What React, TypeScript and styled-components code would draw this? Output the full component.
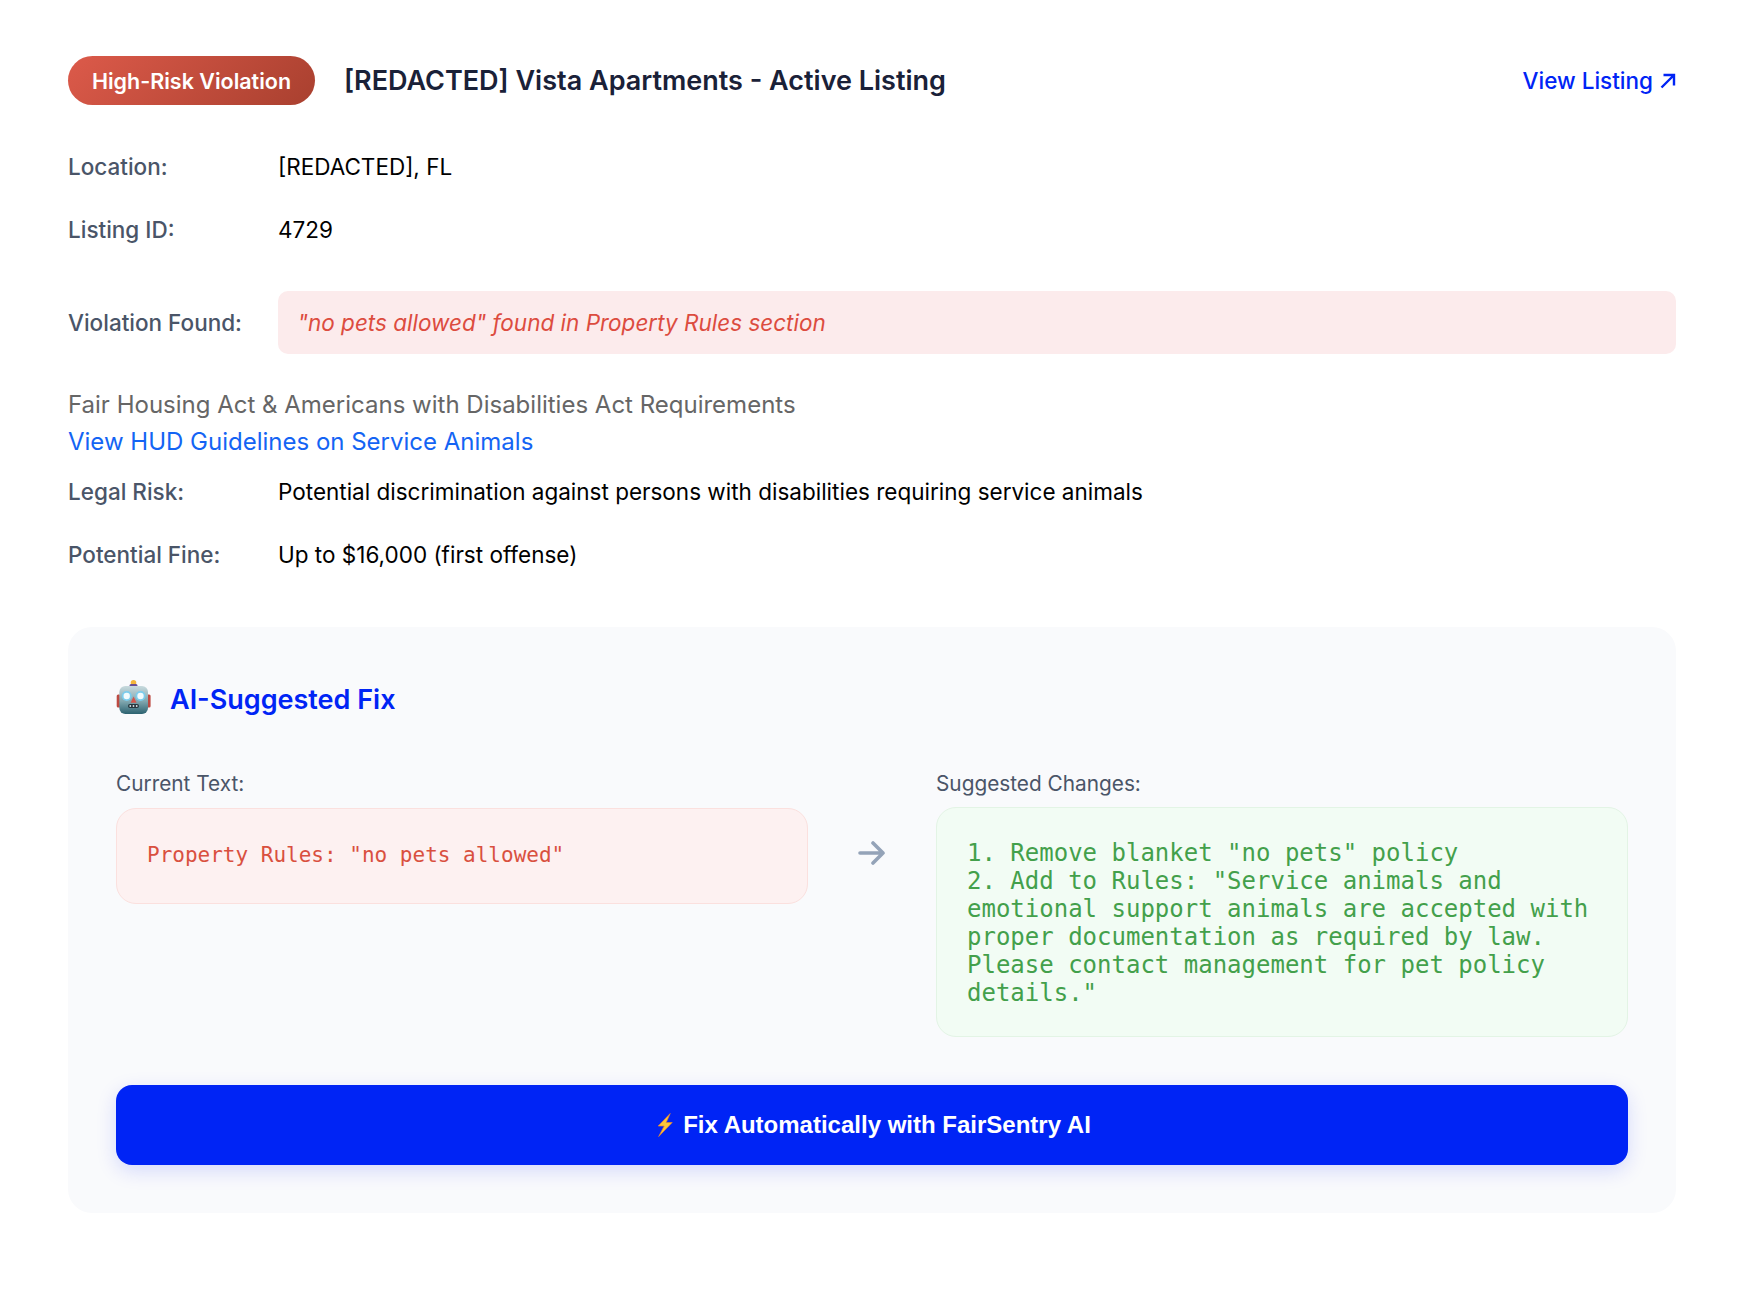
import React from 'react';
import styled, { createGlobalStyle } from 'styled-components';

const Global = createGlobalStyle`
  html, body { margin: 0; padding: 0; background: #fff; }
  body { font-family: Inter, "Liberation Sans", sans-serif; }
`;

const Page = styled.main`
  box-sizing: border-box;
  width: 1748px;
  height: 1292px;
  padding: 56px 72px 0 68px;
  display: flex;
  flex-direction: column;
`;

const Header = styled.header`
  display: flex;
  align-items: center;
  height: 49px;
  margin-bottom: 30px;
`;

const Badge = styled.span`
  box-sizing: border-box;
  width: 247px;
  height: 49px;
  border-radius: 25px;
  display: flex;
  align-items: center;
  justify-content: center;
  background: linear-gradient(135deg, #dc5a4a, #a9402f);
  color: #fff;
  font-size: 21.5px;
  font-weight: 600;
`;

const Title = styled.h1`
  margin: 0 0 0 29px;
  font-size: 27px;
  font-weight: 600;
  color: #1a2138;
  flex: 1;
`;

const ViewLink = styled.a`
  color: #0024f5;
  font-size: 22.5px;
  font-weight: 500;
  display: flex;
  align-items: center;
  gap: 7px;
`;

const Row = styled.div<{ $gap?: number }>`
  display: grid;
  grid-template-columns: 210px 1fr;
  align-items: center;
  height: 63px;
  margin-top: ${p => p.$gap ?? 0}px;
  font-size: 22.5px;
  color: #000;
`;

const Label = styled.span`
  color: #4a5568;
  font-weight: 500;
`;

const ViolationBox = styled.div`
  height: 63px;
  display: flex;
  align-items: center;
  padding: 0 19.5px;
  border-radius: 10px;
  background: #fcebec;
  color: #dc4c3f;
  font-style: italic;
`;

const Legal = styled.p`
  margin: 32px 0 0;
  font-size: 24px;
  line-height: 37px;
  color: #666;
`;

const LegalLink = styled.a`
  display: block;
  color: #1464f4;
`;

const Panel = styled.section`
  box-sizing: border-box;
  height: 586px;
  margin-top: 41px;
  padding: 54px 48px 48px;
  background: #f9fafc;
  border-radius: 24px;
`;

const PanelHead = styled.div`
  display: flex;
  align-items: center;
  gap: 18px;
  height: 36px;
`;

const PanelTitle = styled.h2`
  margin: 0;
  font-size: 27px;
  font-weight: 600;
  color: #0024f5;
`;

const Compare = styled.div`
  display: grid;
  grid-template-columns: 692px 128px 692px;
  margin-top: 54px;
`;

const Col = styled.div``;

const ColLabel = styled.div<{ $tight?: boolean }>`
  font-size: 20.8px;
  line-height: 26px;
  color: #4a5568;
  margin-bottom: ${p => (p.$tight ? 10 : 11)}px;
`;

const CodeBox = styled.pre<{ $good?: boolean }>`
  box-sizing: border-box;
  margin: 0;
  padding: ${p => (p.$good ? '31px 30px 29px' : '29px 30px 31px')};
  border-radius: 20px;
  white-space: pre-wrap;
  font-family: "DejaVu Sans Mono", monospace;
  font-size: ${p => (p.$good ? 24 : 21)}px;
  line-height: ${p => (p.$good ? 28 : 34)}px;
  background: ${p => (p.$good ? '#f2fcf4' : '#fdf1f1')};
  border: 1px solid ${p => (p.$good ? '#e3f4e5' : '#fbe0de')};
  color: ${p => (p.$good ? '#43a04b' : '#d9503f')};
`;

const ArrowCell = styled.div`
  height: 105px;
  margin-top: 29px;
  display: flex;
  align-items: center;
  justify-content: center;
`;

const FixButton = styled.button`
  width: 100%;
  height: 80px;
  margin-top: 48px;
  border: none;
  border-radius: 16px;
  background: #0024f5;
  color: #fff;
  font-family: "Liberation Sans", Arial, sans-serif;
  font-size: 24px;
  font-weight: 700;
  box-shadow: 0 6px 20px rgba(0, 36, 245, 0.15);
  display: flex;
  align-items: center;
  justify-content: center;
  gap: 6px;
`;

const RobotSvg = styled.svg`
  flex: none;
  margin-top: -2px;
`;

const Robot = () => (
  <RobotSvg width="36" height="36" viewBox="0 0 36 36" aria-hidden="true">
    <defs>
      <linearGradient id="rb" x1="0" y1="0" x2="0" y2="1">
        <stop offset="0" stopColor="#c8dade" />
        <stop offset="0.55" stopColor="#80a6ae" />
        <stop offset="1" stopColor="#2c6270" />
      </linearGradient>
    </defs>
    <circle cx="17.5" cy="2.8" r="2.8" fill="#f4b53a" />
    <rect x="13.5" y="4" width="8" height="3.5" rx="1.5" fill="#6a4f93" />
    <rect x="0.7" y="14.5" width="4" height="13" rx="1.5" fill="#bd4a42" />
    <rect x="30.6" y="14.5" width="4" height="13" rx="1.5" fill="#bd4a42" />
    <rect x="3.3" y="6" width="28.7" height="28" rx="6" fill="url(#rb)" />
    <circle cx="10.7" cy="16" r="5" fill="#7cccec" />
    <circle cx="24.5" cy="16" r="5" fill="#7cccec" />
    <circle cx="10.7" cy="16" r="3.2" fill="#f2fbfd" />
    <circle cx="24.5" cy="16" r="3.2" fill="#f2fbfd" />
    <path d="M17.6 16.5l3 6.3h-6z" fill="#d2544c" />
    <rect x="12" y="24" width="11" height="4" rx="2" fill="#27363d" />
    <g fill="#d9e2e5">
      <circle cx="14.3" cy="26" r="0.9" />
      <circle cx="17.5" cy="26" r="0.9" />
      <circle cx="20.7" cy="26" r="0.9" />
    </g>
  </RobotSvg>
);

const Bolt = () => (
  <svg width="24" height="24" viewBox="-4.7 0 24 24" aria-hidden="true">
    <path d="M12.5 0.5L0.5 13h6L1 23.5 14.5 9.5h-6z" fill="#fbc63a" stroke="#e8842e" strokeWidth="0.7" strokeLinejoin="round" />
  </svg>
);

const Arrow = () => (
  <svg width="28" height="24" viewBox="0 0 28 24" fill="none" stroke="#94a3b8" strokeWidth="3.6" strokeLinecap="round" strokeLinejoin="round" aria-hidden="true">
    <path d="M2 12h23M15 2l10 10-10 10" />
  </svg>
);

const NorthEast = () => (
  <svg width="16" height="16" viewBox="0 0 16 16" fill="none" stroke="#0024f5" strokeWidth="2.4" aria-hidden="true">
    <path d="M1.5 14.5L14 2M3.5 2H14v10.5" />
  </svg>
);

export default function App() {
  return (
    <Page>
      <Global />
      <Header>
        <Badge>High-Risk Violation</Badge>
        <Title>[REDACTED] Vista Apartments - Active Listing</Title>
        <ViewLink>View Listing <NorthEast /></ViewLink>
      </Header>
      <Row><Label>Location:</Label><span>[REDACTED], FL</span></Row>
      <Row><Label>Listing ID:</Label><span>4729</span></Row>
      <Row $gap={30}>
        <Label>Violation Found:</Label>
        <ViolationBox>"no pets allowed" found in Property Rules section</ViolationBox>
      </Row>
      <Legal>
        Fair Housing Act &amp; Americans with Disabilities Act Requirements
        <LegalLink>View HUD Guidelines on Service Animals</LegalLink>
      </Legal>
      <Row><Label>Legal Risk:</Label><span>Potential discrimination against persons with disabilities requiring service animals</span></Row>
      <Row><Label>Potential Fine:</Label><span>Up to $16,000 (first offense)</span></Row>
      <Panel>
        <PanelHead><Robot /><PanelTitle>AI-Suggested Fix</PanelTitle></PanelHead>
        <Compare>
          <Col>
            <ColLabel>Current Text:</ColLabel>
            <CodeBox>Property Rules: "no pets allowed"</CodeBox>
          </Col>
          <ArrowCell><Arrow /></ArrowCell>
          <Col>
            <ColLabel $tight>Suggested Changes:</ColLabel>
            <CodeBox $good>{`1. Remove blanket "no pets" policy
2. Add to Rules: "Service animals and
emotional support animals are accepted with
proper documentation as required by law.
Please contact management for pet policy
details."`}</CodeBox>
          </Col>
        </Compare>
        <FixButton><Bolt />Fix Automatically with FairSentry AI</FixButton>
      </Panel>
    </Page>
  );
}
